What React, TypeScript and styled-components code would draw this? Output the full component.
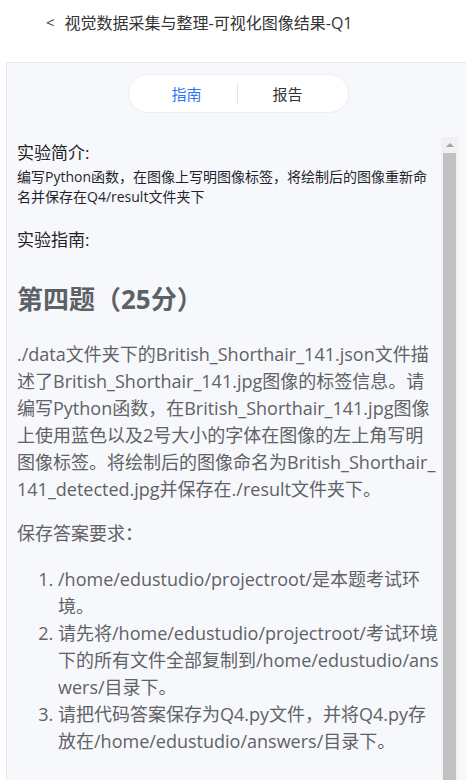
import React, { FC } from 'react';
import styled, { createGlobalStyle } from 'styled-components';

const GlobalStyle = createGlobalStyle`
  html, body {
    margin: 0;
    padding: 0;
    background: #fff;
    overflow: hidden;
  }
  body {
    font-family: "Open Sans", "Noto Sans CJK SC", sans-serif;
  }
`;

const Page = styled.div`
  display: flex;
  flex-direction: column;
  height: 100vh;
  overflow: hidden;
`;

const Header = styled.div`
  flex-shrink: 0;
  display: flex;
  align-items: center;
  gap: 10px;
  height: 44px;
  padding-left: 46px;
  margin-bottom: 18px;
  color: #333;
  font-size: 16px;
`;

const BackArrow = styled.span`
  font-size: 15px;
  color: #444;
  cursor: pointer;
`;

const Panel = styled.div`
  flex: 1;
  min-height: 0;
  margin-left: 6px;
  border-top: 1px solid #e7e8ec;
  border-left: 1px solid #e7e8ec;
  background: #f7f8fc;
  padding-right: 8px;
  display: flex;
  flex-direction: column;
`;

const TabBar = styled.div`
  flex-shrink: 0;
  display: flex;
  justify-content: center;
  padding: 11px 0 0 11px;
  margin-bottom: 24px;
`;

const TabPill = styled.div`
  display: flex;
  align-items: center;
  height: 37px;
  padding: 0 10px 0 8px;
  background: #fff;
  border: 1px solid #eceef2;
  border-radius: 20px;
`;

const Tab = styled.div<{ $active?: boolean }>`
  width: 100px;
  text-align: center;
  font-size: 15px;
  color: ${(p) => (p.$active ? '#2f74f6' : '#333')};
  cursor: pointer;
`;

const TabDivider = styled.div`
  width: 1px;
  height: 21px;
  background: #e4e5e8;
`;

const ScrollFrame = styled.div`
  flex: 1;
  min-height: 0;
  display: flex;
`;

const ScrollBody = styled.div`
  flex: 1;
  min-width: 0;
  overflow: hidden;
  padding: 3px 1px 0 10px;
`;

const ScrollTrack = styled.div`
  width: 17px;
  flex-shrink: 0;
  display: flex;
  flex-direction: column;
  background: #f1f1f1;
`;

const ScrollButton = styled.div`
  height: 16px;
  display: flex;
  align-items: center;
  justify-content: center;

  &::before {
    content: '';
    border-left: 4px solid transparent;
    border-right: 4px solid transparent;
    border-bottom: 4px solid #a3a3a3;
  }
`;

const ScrollThumb = styled.div`
  flex: 1;
  margin: 0 2px;
  background: #c1c1c1;
`;

const SectionTitle = styled.div<{ $gap?: number }>`
  font-size: 17px;
  line-height: 26px;
  color: #222;
  margin-top: ${(p) => p.$gap ?? 0}px;
`;

const Intro = styled.div`
  margin-top: 1px;
  font-size: 14px;
  line-height: 20px;
  color: #1f1f2e;
`;

const Guide = styled.div`
  margin-top: 28px;
  color: #606266;
  font-size: 18px;
  line-height: 27px;
`;

const QuestionTitle = styled.h2`
  margin: 0;
  font-size: 26px;
  line-height: 36px;
  font-weight: 700;
  color: #5c6166;
`;

const Paragraph = styled.p<{ $gap: number }>`
  margin: ${(p) => p.$gap}px 0 0;
  word-break: break-all;
`;

const Steps = styled.ol`
  margin: 19px 0 0;
  padding-left: 41px;
  word-break: break-all;
`;

const steps = [
  '/home/edustudio/projectroot/是本题考试环境。',
  '请先将/home/edustudio/projectroot/考试环境下的所有文件全部复制到/home/edustudio/answers/目录下。',
  '请把代码答案保存为Q4.py文件，并将Q4.py存放在/home/edustudio/answers/目录下。',
];

const App: FC = () => (
  <Page>
    <GlobalStyle />
    <Header>
      <BackArrow>&lt;</BackArrow>
      视觉数据采集与整理-可视化图像结果-Q1
    </Header>
    <Panel>
      <TabBar>
        <TabPill>
          <Tab $active>指南</Tab>
          <TabDivider />
          <Tab>报告</Tab>
        </TabPill>
      </TabBar>
      <ScrollFrame>
        <ScrollBody>
          <SectionTitle>实验简介:</SectionTitle>
          <Intro>
            编写Python函数，在图像上写明图像标签，将绘制后的图像重新命名并保存在Q4/result文件夹下
          </Intro>
          <SectionTitle $gap={20}>实验指南:</SectionTitle>
          <Guide>
            <QuestionTitle>第四题（25分）</QuestionTitle>
            <Paragraph $gap={24}>
              ./data文件夹下的British_Shorthair_141.json文件描述了British_Shorthair_141.jpg图像的标签信息。请编写Python函数，在British_Shorthair_141.jpg图像上使用蓝色以及2号大小的字体在图像的左上角写明图像标签。将绘制后的图像命名为British_Shorthair_141_detected.jpg并保存在./result文件夹下。
            </Paragraph>
            <Paragraph $gap={17}>保存答案要求：</Paragraph>
            <Steps>
              {steps.map((s) => (
                <li key={s}>{s}</li>
              ))}
            </Steps>
          </Guide>
        </ScrollBody>
        <ScrollTrack>
          <ScrollButton />
          <ScrollThumb />
        </ScrollTrack>
      </ScrollFrame>
    </Panel>
  </Page>
);

export default App;
